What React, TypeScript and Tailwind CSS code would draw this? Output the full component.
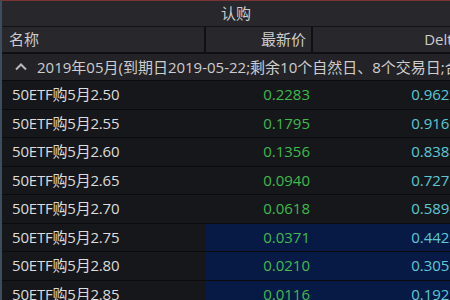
const rows = [
  { name: '50ETF购5月2.50', price: '0.2283', delta: '0.9627', itm: true },
  { name: '50ETF购5月2.55', price: '0.1795', delta: '0.9166', itm: true },
  { name: '50ETF购5月2.60', price: '0.1356', delta: '0.8388', itm: true },
  { name: '50ETF购5月2.65', price: '0.0940', delta: '0.7271', itm: true },
  { name: '50ETF购5月2.70', price: '0.0618', delta: '0.5894', itm: true },
  { name: '50ETF购5月2.75', price: '0.0371', delta: '0.4422', itm: false },
  { name: '50ETF购5月2.80', price: '0.0210', delta: '0.3051', itm: false },
  { name: '50ETF购5月2.85', price: '0.0116', delta: '0.1927', itm: false },
]

export default function App() {
  return (
    <div
      className="w-[450px] h-[300px] overflow-hidden bg-[#16171b] border-t border-[#7a3434] border-l-2 border-l-[#3d4d5e] text-[15px] leading-none"
      style={{ fontFamily: '"Open Sans", "Noto Sans CJK SC", sans-serif' }}
    >
      <div className="w-[468px]">
        {/* 认购 */}
        <div className="h-[26px] bg-[#27272c] border-b border-[#131315] flex items-center justify-center text-[#cdcdcd]">
          认购
        </div>

        {/* column header */}
        <div className="h-[27px] bg-[#27272c] border-b-2 border-[#101012] flex text-[#cdcdcd]">
          <div className="w-[204px] flex items-center pl-[7px] border-r-2 border-[#101012]">名称</div>
          <div className="w-[107px] flex items-center justify-end pr-[5px] border-r-2 border-[#101012]">最新价</div>
          <div className="flex-1 flex items-center justify-end pr-[9px]">Delta</div>
        </div>

        {/* group row */}
        <div className="h-[27px] bg-[#232327] border-b border-[#0b0b0d] flex items-center text-[#cdcdcd] whitespace-nowrap">
          <svg width="14" height="14" viewBox="0 0 14 14" className="ml-[12px] mr-[9px] shrink-0">
            <path d="M2 9.5 L7 4.5 L12 9.5" fill="none" stroke="#b8b8b8" strokeWidth="2" />
          </svg>
          <span>2019年05月(到期日2019-05-22;剩余10个自然日、8个交易日;合约乘数10000)</span>
        </div>

        {/* data rows */}
        {rows.map((r) => (
          <div key={r.name} className="h-[28.5px] border-b border-[#0b0b0d] flex">
            <div className="w-[204px] flex items-center pl-[10px] text-[#dcdcdc] bg-[#16171b] tracking-[-0.2px]">{r.name}</div>
            <div className={'flex-1 flex ' + (r.itm ? 'bg-[#16171b]' : 'bg-[#071a45]')}>
              <div className="w-[109px] flex items-center justify-end pr-[5px] text-[#3fba4c]">{r.price}</div>
              <div className="flex-1 flex items-center justify-end pr-[12px] text-[#5cc9d2]">{r.delta}</div>
            </div>
          </div>
        ))}
      </div>
    </div>
  )
}
